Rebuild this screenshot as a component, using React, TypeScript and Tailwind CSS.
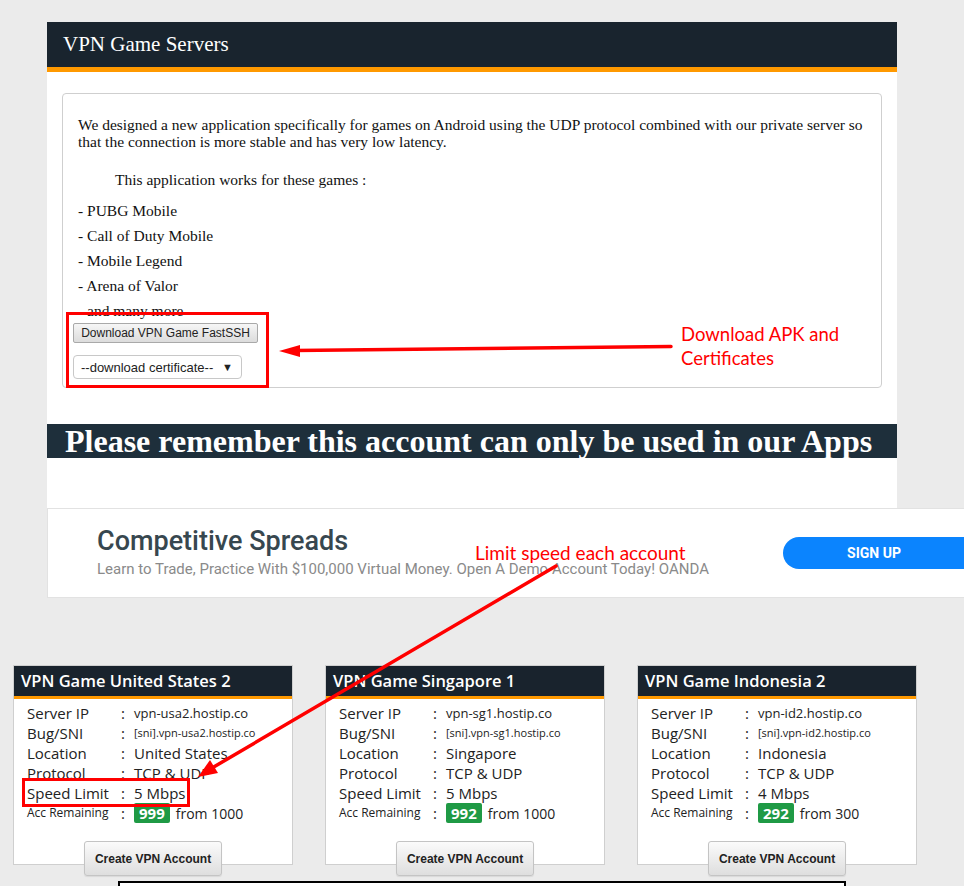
import React from 'react';

type Server = {
  name: string;
  host: string;
  location: string;
  speed: string;
  remaining: number;
  total: number;
};

const servers: Server[] = [
  { name: 'VPN Game United States 2', host: 'vpn-usa2.hostip.co', location: 'United States', speed: '5 Mbps', remaining: 999, total: 1000 },
  { name: 'VPN Game Singapore 1', host: 'vpn-sg1.hostip.co', location: 'Singapore', speed: '5 Mbps', remaining: 992, total: 1000 },
  { name: 'VPN Game Indonesia 2', host: 'vpn-id2.hostip.co', location: 'Indonesia', speed: '4 Mbps', remaining: 292, total: 300 },
];

const games = ['PUBG Mobile', 'Call of Duty Mobile', 'Mobile Legend', 'Arena of Valor', 'and many more'];

function Row({ label, children, small }: { label: string; children: React.ReactNode; small?: boolean }) {
  return (
    <div className="flex h-[20px] items-center">
      <span className={`w-[94px] ${small ? 'text-[12px]' : 'text-[15px]'}`}>{label}</span>
      <span className="w-[13px] text-[15px]">:</span>
      <span className="flex items-center">{children}</span>
    </div>
  );
}

function ServerCard({ server }: { server: Server }) {
  return (
    <div className="h-[200px] w-[280px] border border-[#cfcfcf] bg-white font-['Open_Sans',sans-serif] text-[#222]">
      <div className="flex h-[33px] items-center border-b-[3px] border-[#ff9900] bg-[#19232d] px-[7px] text-[16.5px] font-semibold text-white">
        {server.name}
      </div>
      <div className="px-[13px] pt-[4px]">
        <Row label="Server IP">
          <span className="text-[13px]">{server.host}</span>
        </Row>
        <Row label="Bug/SNI">
          <span className="text-[11px]">[sni].{server.host}</span>
        </Row>
        <Row label="Location">
          <span className="text-[15px]">{server.location}</span>
        </Row>
        <Row label="Protocol">
          <span className="text-[15px]">TCP &amp; UDP</span>
        </Row>
        <Row label="Speed Limit">
          <span className="text-[15px]">{server.speed}</span>
        </Row>
        <Row label="Acc Remaining" small>
          <span className="flex h-[20px] items-center rounded-[2px] bg-[#1f9a45] px-[5px] text-[15px] font-bold text-white">
            {server.remaining}
          </span>
          <span className="ml-[6px] text-[14px]">from {server.total}</span>
        </Row>
      </div>
      <div className="mt-[18px] flex justify-center">
        <button className="h-[35px] w-[138px] rounded-[3px] border border-[#c4c4c4] bg-gradient-to-b from-[#fbfbfb] to-[#dedede] font-['Liberation_Sans',sans-serif] text-[12px] font-bold text-[#222] shadow-[0_1px_1px_rgba(0,0,0,0.08)]">
          Create VPN Account
        </button>
      </div>
    </div>
  );
}

// Red markup drawn over the page: boxes, arrows and notes
function Annotations() {
  return (
    <div className="pointer-events-none absolute inset-0">
      <svg width="964" height="886" className="absolute left-0 top-0">
        <rect x="67.5" y="313.5" width="200" height="73" fill="none" stroke="#f00" strokeWidth="3" />
        <line x1="671" y1="346.5" x2="295" y2="350.5" stroke="#f00" strokeWidth="3.5" strokeLinecap="round" />
        <polygon points="279,351 300,345 300,357" fill="#f00" />
        <rect x="23.5" y="779.5" width="165" height="26" fill="none" stroke="#f00" strokeWidth="3" />
        <line x1="556" y1="566" x2="212" y2="768" stroke="#f00" strokeWidth="3.5" strokeLinecap="round" />
        <polygon points="198,777 210,760 218,773" fill="#f00" />
      </svg>
      <div className="absolute left-[681px] top-[322px] font-['Lato',sans-serif] text-[18.5px] leading-[24px] text-[#f00]">
        Download APK and
        <br />
        Certificates
      </div>
      <div className="absolute left-[475px] top-[541px] font-['Lato',sans-serif] text-[19px] leading-[24px] text-[#f00]">
        Limit speed each account
      </div>
    </div>
  );
}

export default function App() {
  return (
    <div className="relative h-[886px] overflow-hidden bg-[#ebebeb]">
      <div className="pl-[47px] pt-[22px]">
        {/* Main panel */}
        <section className="w-[850px] bg-white">
          <header className="flex h-[50px] items-center border-b-[5px] border-[#ff9900] bg-[#19242e] pl-[16px]">
            <h1 className="font-['Liberation_Serif',serif] text-[21px] text-white">VPN Game Servers</h1>
          </header>

          <div className="px-[15px] pt-[21px]">
            <div className="rounded-[4px] border border-[#cfcfcf] pb-[8px] pl-[15px] pr-[9px] pt-[22px] font-['Liberation_Serif',serif] text-[15.5px] text-[#111]">
              <p className="leading-[17px]">
                We designed a new application specifically for games on Android using the UDP protocol combined with our private server so that the connection is more stable and has very low latency.
              </p>
              <p className="mt-[17px] mb-[6px] pl-[37px] leading-[25px]">This application works for these games :</p>
              {games.map(g => (
                <p key={g} className="leading-[25px]">- {g}</p>
              ))}
              <div className="-mt-[3px]">
                <button className="-ml-[5px] h-[20px] w-[185px] rounded-[2px] border border-[#a9a9a9] bg-gradient-to-b from-[#f6f6f6] to-[#dcdcdc] font-['Liberation_Sans',sans-serif] text-[12px] text-[#222]">
                  Download VPN Game FastSSH
                </button>
              </div>
              <div className="mt-[12px] -ml-[5px] flex h-[24px] w-[169px] items-center justify-between whitespace-nowrap rounded-[4px] border border-[#c8c8c8] bg-white pl-[7px] pr-[8px] font-['Liberation_Sans',sans-serif] text-[13px] text-[#222]">
                <span>--download certificate--</span>
                <span className="text-[11px]">▼</span>
              </div>
            </div>
          </div>

          <div className="mt-[36px] flex h-[34px] items-center bg-[#1e2f3b] pl-[18px] font-['Liberation_Serif',serif] text-[32px] font-bold leading-none text-white">
            Please remember this account can only be used in our Apps
          </div>
          <div className="h-[50px]" />
        </section>

        {/* Sponsored strip */}
        <div className="flex h-[90px] w-[940px] items-center border border-[#e2e2e2] bg-white pl-[49px] font-['Roboto',sans-serif]">
          <div className="w-[686px]">
            <div className="text-[27px] font-medium leading-[30px] text-[#37474f]">Competitive Spreads</div>
            <div className="mt-[2px] text-[15px] text-[#8a8a8a]">
              Learn to Trade, Practice With $100,000 Virtual Money. Open A Demo Account Today! OANDA
            </div>
          </div>
          <button className="h-[32px] w-[200px] rounded-full bg-[#0b84fe] pr-[18px] text-[14px] font-bold text-white">SIGN UP</button>
        </div>
      </div>

      {/* Server cards */}
      <div className="mt-[67px] flex gap-[32px] pl-[13px]">
        {servers.map(s => (
          <ServerCard key={s.name} server={s} />
        ))}
      </div>

      <div className="ml-[118px] mt-[16px] h-[20px] w-[728px] border-2 border-black bg-white" />

      <Annotations />
    </div>
  );
}
